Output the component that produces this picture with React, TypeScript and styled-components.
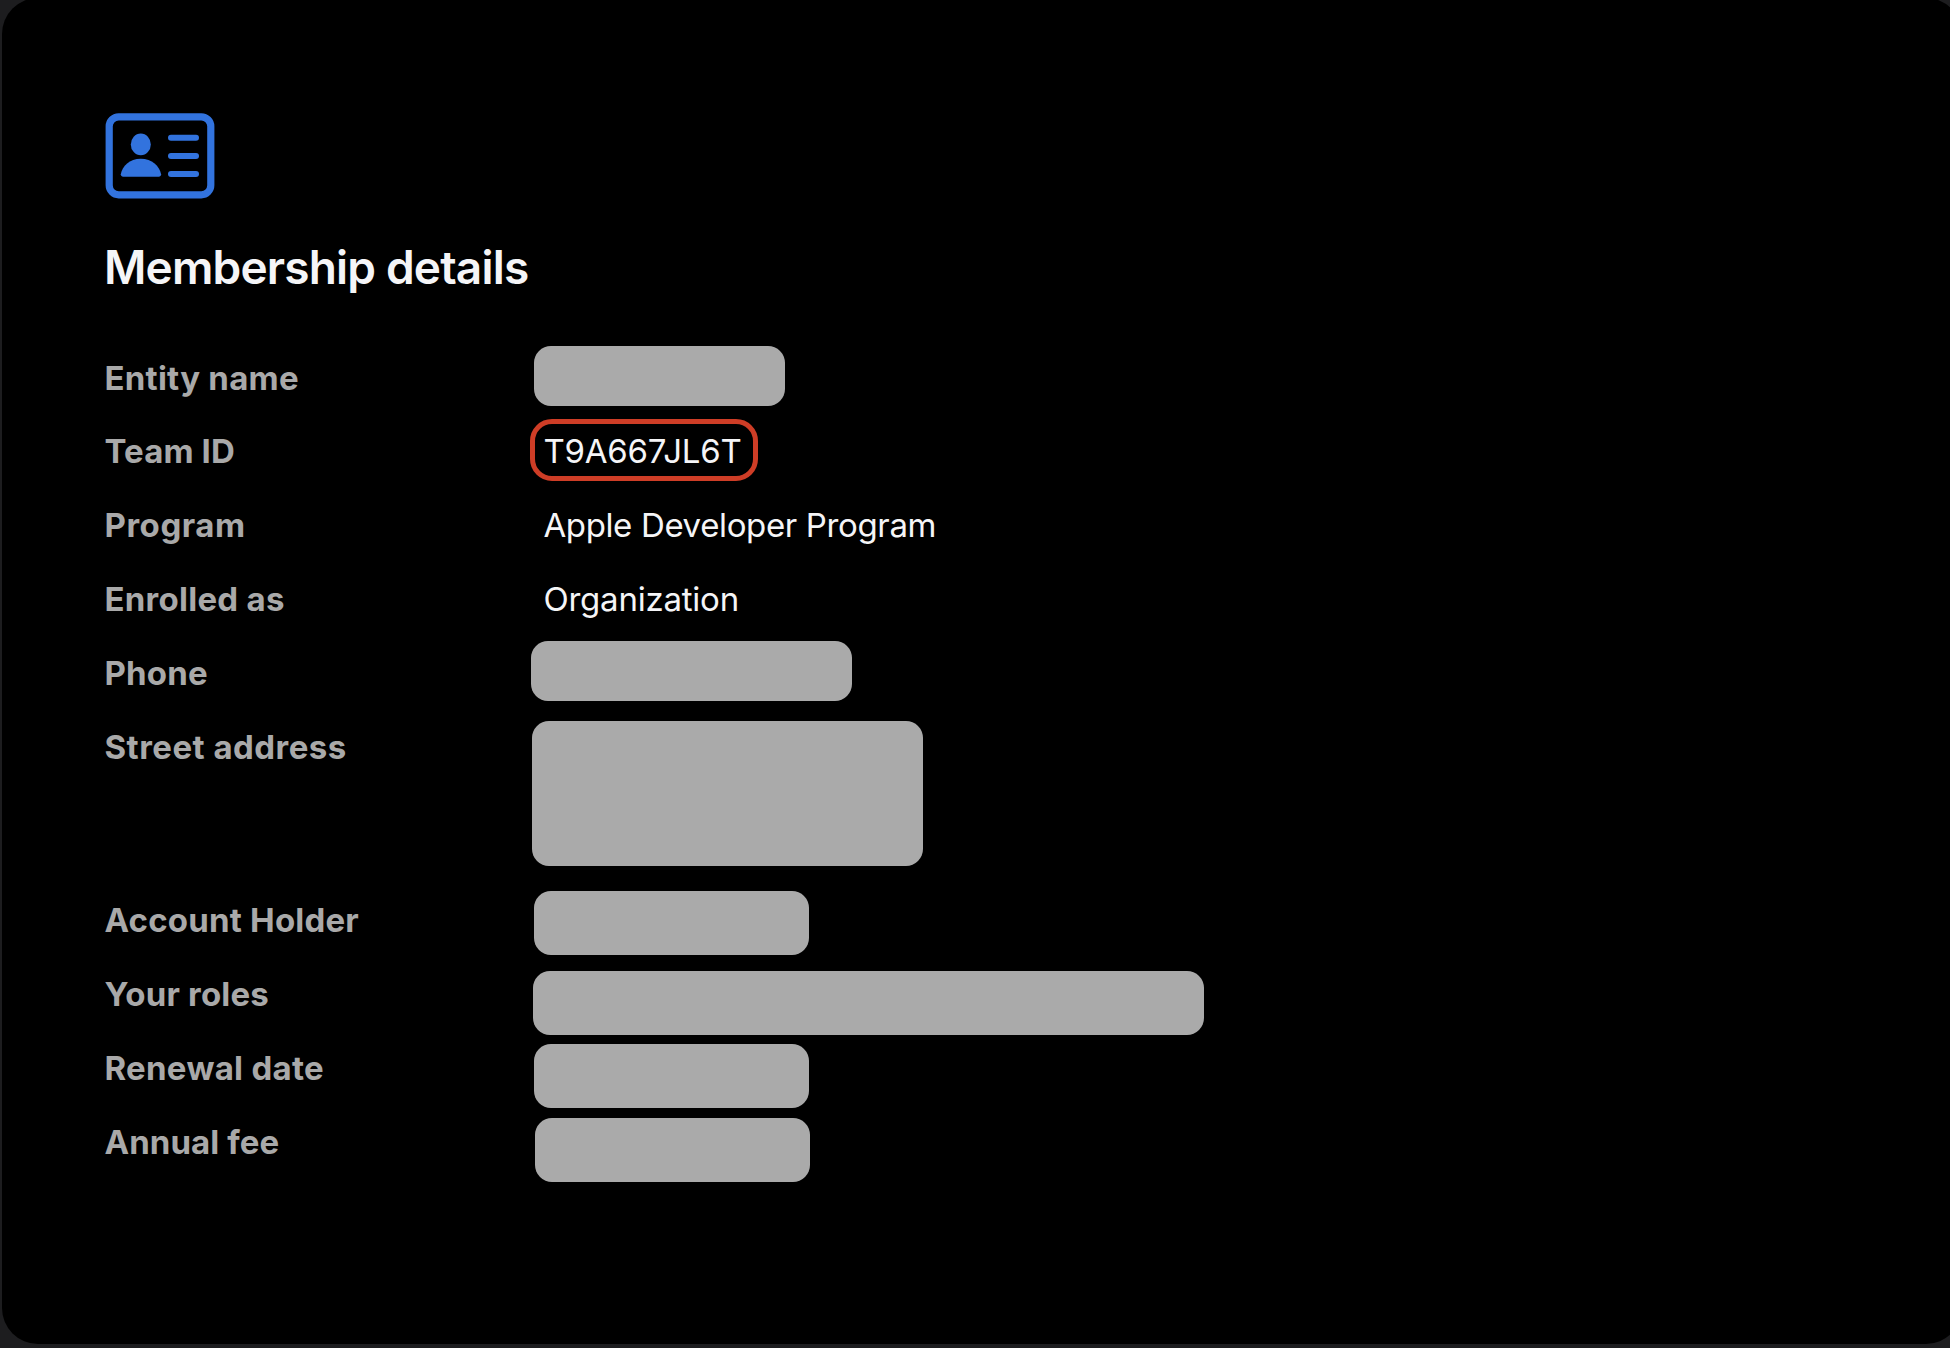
import React from "react";
import styled, { createGlobalStyle } from "styled-components";

const GlobalStyle = createGlobalStyle`
  * { box-sizing: border-box; }
  body {
    margin: 0;
    background: #1d1d1f;
    font-family: Inter, "Liberation Sans", sans-serif;
    -webkit-font-smoothing: antialiased;
  }
`;

const Viewport = styled.div`
  width: 1950px;
  height: 1348px;
  overflow: hidden;
  display: flex;
`;

const Card = styled.section`
  flex: none;
  width: 1960px;
  height: 1346px;
  margin: -2px 0 0 2px;
  padding: 115px 0 0 103px;
  border-radius: 36px;
  background: #000;
`;

const Icon = styled.svg`
  display: block;
  width: 110px;
  height: 86px;
`;

const Title = styled.h2`
  margin: 40px 0 0 -1px;
  font-size: 46px;
  font-weight: 600;
  line-height: 56px;
  letter-spacing: -0.82px;
  color: #f5f5f7;
`;

const Details = styled.dl`
  margin: 50px 0 0;
`;

const Row = styled.div<{ $height?: number }>`
  display: grid;
  grid-template-columns: 425px 1fr;
  align-items: start;
  height: ${(p) => p.$height ?? 74}px;
`;

const Label = styled.dt<{ $tracking: number }>`
  margin-left: -0.5px;
  padding-top: 13px;
  font-size: 33px;
  font-weight: 700;
  line-height: 40px;
  letter-spacing: ${(p) => p.$tracking}px;
  color: #a9a9a9;
`;

const Value = styled.dd`
  margin: 0;
`;

const ValueText = styled.span<{ $tracking: number }>`
  display: block;
  padding: 13px 0 0 13.4px;
  font-size: 33px;
  line-height: 40px;
  letter-spacing: ${(p) => p.$tracking}px;
  white-space: nowrap;
  color: #f5f5f7;
`;

const Highlight = styled.div`
  width: 228px;
  height: 62px;
  margin-top: 1px;
  border: 5px solid #ce3d26;
  border-radius: 22px;

  ${ValueText} {
    padding: 7px 0 0 8.4px;
  }
`;

const Redacted = styled.div<{ $w: number; $h: number; $top: number; $left: number }>`
  width: ${(p) => p.$w}px;
  height: ${(p) => p.$h}px;
  margin: ${(p) => p.$top}px 0 0 ${(p) => p.$left}px;
  border-radius: 17px;
  background: #aaaaaa;
`;

type Detail = {
  label: string;
  tracking: number;
  height?: number;
  text?: string;
  textTracking?: number;
  highlighted?: boolean;
  box?: { w: number; h: number; top: number; left: number };
};

const details: Detail[] = [
  { label: "Entity name", tracking: 0.25, height: 73, box: { w: 251, h: 60, top: 1, left: 4 } },
  { label: "Team ID", tracking: 0.12, text: "T9A667JL6T", textTracking: -0.2, highlighted: true },
  { label: "Program", tracking: 0.55, text: "Apple Developer Program", textTracking: -0.36 },
  { label: "Enrolled as", tracking: 0.26, text: "Organization", textTracking: -0.22 },
  { label: "Phone", tracking: 0.2, box: { w: 321, h: 60, top: 1, left: 1 } },
  { label: "Street address", tracking: 0.48, height: 173, box: { w: 391, h: 145, top: 7, left: 2 } },
  { label: "Account Holder", tracking: 0.2, box: { w: 275, h: 64, top: 4, left: 4 } },
  { label: "Your roles", tracking: 0.2, box: { w: 671, h: 64, top: 10, left: 3 } },
  { label: "Renewal date", tracking: 0.3, box: { w: 275, h: 64, top: 9, left: 4 } },
  { label: "Annual fee", tracking: 0.08, box: { w: 275, h: 64, top: 9, left: 5 } },
];

function MembershipIcon() {
  return (
    <Icon viewBox="0 0 110 86" fill="#3273de" aria-hidden="true">
      <rect x="4.2" y="3.8" width="101.6" height="78" rx="9.5" fill="none" stroke="#3273de" strokeWidth="7.2" />
      <ellipse cx="35.8" cy="31.4" rx="10" ry="10.9" />
      <path d="M18.2 63.7C16.7 63.7 15.8 62.9 15.8 61.3C17.2 53.4 24.6 45.8 35.8 45.8C47 45.8 54.6 53.4 56.1 61.3C56.1 62.9 55.2 63.7 53.7 63.7Z" />
      <rect x="63" y="21.7" width="31" height="6" rx="3" />
      <rect x="63" y="39.9" width="31" height="6" rx="3" />
      <rect x="63" y="57.9" width="31" height="6" rx="3" />
    </Icon>
  );
}

function DetailValue({ text, textTracking = 0, highlighted, box }: Detail) {
  if (box) return <Redacted $w={box.w} $h={box.h} $top={box.top} $left={box.left} />;
  const content = <ValueText $tracking={textTracking}>{text}</ValueText>;
  return highlighted ? <Highlight>{content}</Highlight> : content;
}

export default function App() {
  return (
    <>
      <GlobalStyle />
      <Viewport>
        <Card>
          <MembershipIcon />
          <Title>Membership details</Title>
          <Details>
            {details.map((item) => (
              <Row key={item.label} $height={item.height}>
                <Label $tracking={item.tracking}>{item.label}</Label>
                <Value>
                  <DetailValue {...item} />
                </Value>
              </Row>
            ))}
          </Details>
        </Card>
      </Viewport>
    </>
  );
}
